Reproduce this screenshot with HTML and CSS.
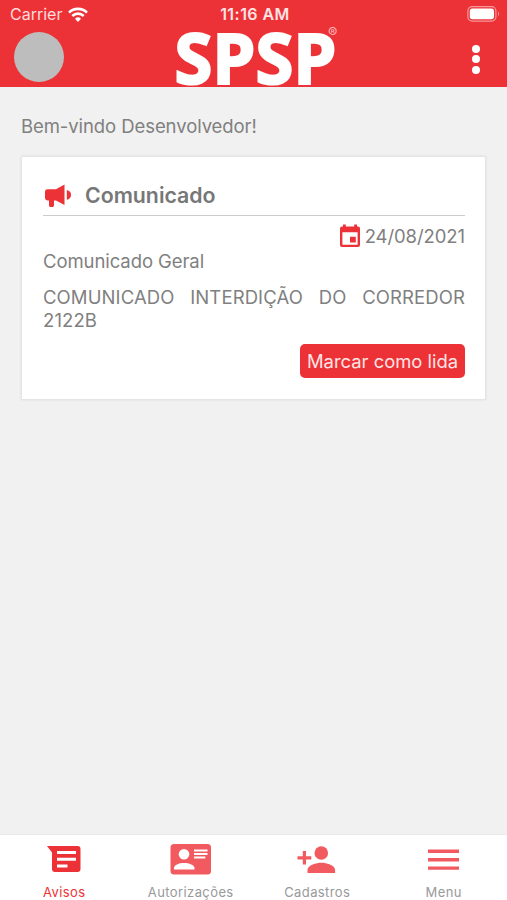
FILE: index.html
```html
<!DOCTYPE html>
<html lang="pt-BR">
<head>
  <meta charset="UTF-8">
  <meta name="viewport" content="width=device-width, initial-scale=1">
  <title>SPSP - Avisos</title>
  <link rel="stylesheet" href="styles.css">
</head>
<body>

  <header>
    <div class="status-bar">
      <div class="carrier">
        <span>Carrier</span>
        <svg width="20" height="15" viewBox="0 0 20 15" fill="none" stroke="#fff" stroke-width="2.6">
          <path d="M1 5.6a12.8 12.8 0 0 1 18 0"/>
          <path d="M4.3 9a8.1 8.1 0 0 1 11.4 0"/>
          <path d="M10 15l-3-3.2a4.3 4.3 0 0 1 6 0z" fill="#fff" stroke="none"/>
        </svg>
      </div>
      <span class="clock">11:16 AM</span>
      <svg class="battery" width="33" height="16" viewBox="0 0 33 16">
        <rect x=".9" y=".7" width="28" height="14.4" rx="4.2" fill="none" stroke="#fff" stroke-opacity=".5" stroke-width="1.2"/>
        <rect x="2.8" y="2.6" width="24.2" height="10.6" rx="2.6" fill="#fff"/>
        <path d="M31 5.6q2.2 2.2 0 4.6z" fill="#fff" fill-opacity=".5"/>
      </svg>
    </div>
    <div class="top-bar">
      <div class="avatar"></div>
      <svg class="logo" width="166" height="59" viewBox="0 0 166 59">
        <text class="logo-text" x="3.500" y="55.500" textLength="162" lengthAdjust="spacingAndGlyphs">SPSP</text>
        <text class="logo-mark" x="157" y="10">®</text>
      </svg>
      <div class="more"><i></i><i></i><i></i></div>
    </div>
  </header>

  <main>
    <p class="welcome">Bem-vindo Desenvolvedor!</p>

    <div class="card">
      <div class="card-title">
        <svg width="28" height="24" viewBox="0 0 28 24" fill="#ed3237">
          <path d="M3.5 5.2H12L20.5.4V21L12 16.4H10v5.2q0 1.300-1.300 1.300H6.300Q5 22.900 5 21.600v-5.200H3.500Q1 16.400 1 14V7.500Q1 5.200 3.500 5.200z"/>
          <path d="M22.800 6.100q4.200 1 4.200 4.800t-4.200 4.800z"/>
        </svg>
        <h2>Comunicado</h2>
      </div>
      <div class="date">
        <svg width="22" height="24" viewBox="0 0 22 24">
          <path fill="#ed3237" fill-rule="evenodd" d="M4 .5h2.800v2h8.400v-2H18v2h1q2 0 2 2V21q0 2-2 2H3q-2 0-2-2V4.500q0-2 2-2h1zM3.400 8.300v12.400h15.200V8.300zM11 12.800h5.800v5.800H11z"/>
        </svg>
        <span>24/08/2021</span>
      </div>
      <p class="subject">Comunicado Geral</p>
      <p class="message">COMUNICADO INTERDIÇÃO DO CORREDOR 2122B</p>
      <button>Marcar como lida</button>
    </div>
  </main>

  <nav>
    <a class="active">
      <svg width="42" height="34" viewBox="0 0 42 34">
        <path fill="#ed3237" d="M4 4h30.500q3 0 3 3v20q0 3-3 3H12q-3 0-3-3V10.500z"/>
        <path stroke="#fff" stroke-width="3" d="M14 10.500h19M14 17.300h19M14 24h10.500"/>
      </svg>
      <span>Avisos</span>
    </a>
    <a>
      <svg width="42" height="34" viewBox="0 0 42 34">
        <rect x=".5" y="2" width="40.500" height="30.500" rx="3.500" fill="#f15b60"/>
        <circle cx="14" cy="12.300" r="5.300" fill="#fff"/>
        <path fill="#fff" d="M4 27.500v-1.500c0-3 5-5 10-5s10.500 2 10.500 5v1.500z"/>
        <path stroke="#fff" stroke-width="1.800" d="M24 8.500H37.500M24 12H37.500M24 15.500h11.300"/>
      </svg>
      <span>Autorizações</span>
    </a>
    <a>
      <svg width="42" height="34" viewBox="0 0 42 34" fill="#f15b60">
        <circle cx="25.300" cy="11" r="6.800"/>
        <path d="M11.500 31v-3.200c0-4.600 9.200-7 13.800-7s13.800 2.400 13.800 7V31z"/>
        <path d="M6.800 9h3.200v5.200h5.300v3.200H10v5.200H6.800v-5.200H1.500v-3.200h5.300z"/>
      </svg>
      <span>Cadastros</span>
    </a>
    <a>
      <svg width="42" height="34" viewBox="0 0 42 34">
        <path stroke="#f15b60" stroke-width="3.400" d="M5 9.300h31M5 17.700h31M5 26.100h31"/>
      </svg>
      <span>Menu</span>
    </a>
  </nav>

</body>
</html>
```
FILE: styles.css
```css
* {
  box-sizing: border-box;
}

body {
  font-family: Inter, "Liberation Sans", sans-serif;
  background: #f1f1f1;
  color: #808080;
  margin: 0;
  height: 100vh;
  display: flex;
  flex-direction: column;
}

p, h2 {
  margin: 0;
}

svg {
  display: block;
}

header {
  background: #ed3237;
  color: #fff;
  height: 87px;
}

.status-bar {
  display: grid;
  grid-template-columns: 1fr auto 1fr;
  align-items: center;
  height: 28px;
  padding: 0 7px 0 10px;
  font-size: 16px;
}

.carrier {
  display: flex;
  align-items: center;
  gap: 6px;
  color: #ffdcdd;
}

.clock {
  font-weight: 600;
  font-size: 16px;
  letter-spacing: .45px;
  line-height: 16px;
  color: #ffe4e4;
}

.battery {
  justify-self: end;
}

.top-bar {
  display: grid;
  grid-template-columns: 1fr auto 1fr;
  height: 59px;
  padding: 0 27px 0 14px;
}

.avatar {
  width: 50px;
  height: 50px;
  margin-top: 4px;
  border-radius: 50%;
  background: #bdbdbd;
}

.logo {
  margin-right: -14px;
  overflow: visible;
}

.logo-text {
  font-family: "Open Sans", sans-serif;
  font-weight: 700;
  font-size: 70px;
  fill: #fff;
  stroke: #fff;
  stroke-width: 2.2px;
}

.logo-mark {
  font-size: 14px;
  fill: #fbb;
}

.more {
  justify-self: end;
  display: flex;
  flex-direction: column;
  gap: 2.3px;
  padding-top: 17px;
}

.more i {
  width: 8px;
  height: 8px;
  border-radius: 50%;
  background: #fff;
}

main {
  flex: 1;
  padding: 28px 21px 0;
  font-size: 18.5px;
  line-height: 23px;
  letter-spacing: -.08px;
}

.welcome {
  margin-bottom: 18px;
}

.card {
  background: #fff;
  border: 1px solid #e4e6e6;
  box-shadow: 0 0 2px #dcdede;
  height: 244px;
  padding: 23px 20px 0 21px;
}

.card-title {
  display: flex;
  align-items: center;
  gap: 13px;
  height: 36px;
  padding: 3px 0 7px 1px;
  border-bottom: 1px solid #ccc;
}

.card-title h2 {
  font-size: 21.3px;
  font-weight: 600;
  letter-spacing: 0;
  color: #777;
}

.date {
  display: flex;
  justify-content: flex-end;
  align-items: center;
  gap: 4px;
  margin-top: 8px;
}

.subject {
  margin-top: 2px;
}

.message {
  margin-top: 13px;
  letter-spacing: .1px;
  text-align: justify;
}

.card button {
  display: block;
  width: 165px;
  height: 34px;
  margin: 12px 0 0 auto;
  padding: 0;
  border: none;
  border-radius: 5px;
  background: #ed3237;
  color: #ffe4e4;
  font: 18.4px Inter, sans-serif;
}

nav {
  display: grid;
  grid-template-columns: repeat(4, 1fr);
  height: 66px;
  padding-left: 1px;
  background: #fff;
  border-top: 1px solid #eaeaea;
}

nav a {
  display: flex;
  flex-direction: column;
  align-items: center;
  gap: 8px;
  padding-top: 7px;
  font-size: 13px;
  line-height: 16px;
  letter-spacing: .4px;
  color: #999;
}

nav .active {
  color: #ed3237;
}
```
